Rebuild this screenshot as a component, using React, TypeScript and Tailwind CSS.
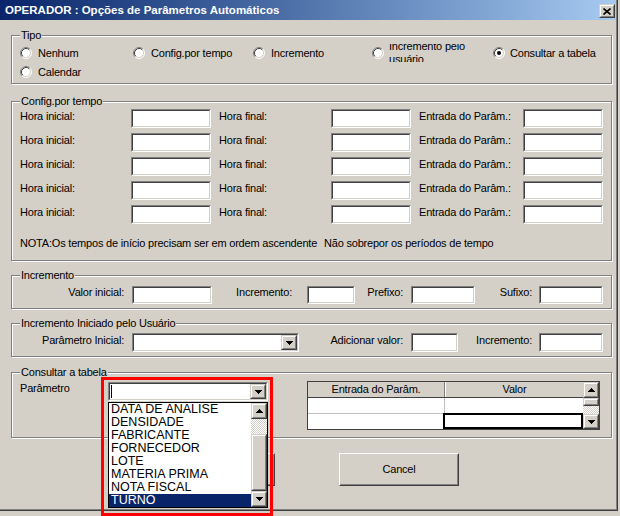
import React from "react";

type Box = { className?: string; children?: React.ReactNode };

function Arrow({ up = false }: { up?: boolean }) {
  return (
    <svg width="7" height="4" viewBox="0 0 7 4" className={up ? "rotate-180" : ""}>
      <rect x="0" y="0" width="7" height="1" fill="#000" />
      <rect x="1" y="1" width="5" height="1" fill="#000" />
      <rect x="2" y="2" width="3" height="1" fill="#000" />
      <rect x="3" y="3" width="1" height="1" fill="#000" />
    </svg>
  );
}

function SmallBtn({ className = "", children }: Box) {
  return (
    <div className={`shrink-0 bg-[#d4d0c8] border border-t-[#d4d0c8] border-l-[#d4d0c8] border-r-[#404040] border-b-[#404040] ${className}`}>
      <div className="h-full border border-t-white border-l-white border-r-[#808080] border-b-[#808080] flex items-center justify-center">
        {children}
      </div>
    </div>
  );
}

function Checker({ className = "" }: Box) {
  return (
    <div className={`bg-[repeating-conic-gradient(#ffffff_0%_25%,#d4d0c8_0%_50%)] bg-size-[2px_2px] ${className}`} />
  );
}

function Edit({ className = "" }: Box) {
  return (
    <div className={`shrink-0 border border-t-[#808080] border-l-[#808080] border-r-white border-b-white ${className}`}>
      <div className="h-full border border-t-[#404040] border-l-[#404040] border-r-[#d4d0c8] border-b-[#d4d0c8] bg-white" />
    </div>
  );
}

function Combo({ className = "", caret = false }: Box & { caret?: boolean }) {
  return (
    <div className={`shrink-0 border border-t-[#808080] border-l-[#808080] border-r-white border-b-white ${className}`}>
      <div className="h-full border border-t-[#404040] border-l-[#404040] border-r-[#d4d0c8] border-b-[#d4d0c8] bg-white flex">
        <div className="flex-1 flex items-center pl-px">
          {caret && <div className="w-px h-[13px] bg-black" />}
        </div>
        <SmallBtn className="w-[16px] h-full">
          <Arrow />
        </SmallBtn>
      </div>
    </div>
  );
}

function Radio({ checked = false }: { checked?: boolean }) {
  return (
    <svg width="12" height="12" viewBox="0 0 12 12" className="shrink-0">
      <circle cx="6" cy="6" r="5" fill="#fff" />
      <path d="M2.11 9.89A5.5 5.5 0 0 1 9.89 2.11" stroke="#808080" fill="none" />
      <path d="M9.89 2.11A5.5 5.5 0 0 1 2.11 9.89" stroke="#fff" fill="none" />
      <path d="M2.82 9.18A4.5 4.5 0 0 1 9.18 2.82" stroke="#404040" fill="none" />
      <path d="M9.18 2.82A4.5 4.5 0 0 1 2.82 9.18" stroke="#d4d0c8" fill="none" />
      {checked && <circle cx="6" cy="6" r="2" fill="#000" />}
    </svg>
  );
}

function Group({ title, className = "", children }: Box & { title: string }) {
  return (
    <fieldset className={`border border-[#808080] shadow-[inset_1px_1px_0_#fff,1px_1px_0_#fff] ${className}`}>
      <legend className="ml-[8px] px-px bg-[#d4d0c8] leading-[13px]">{title}</legend>
      {children}
    </fieldset>
  );
}

function PushBtn({ label }: { label: string }) {
  return (
    <div className="w-[120px] h-[33px] bg-[#d4d0c8] border border-t-white border-l-white border-r-[#404040] border-b-[#404040]">
      <div className="h-full border border-t-[#d4d0c8] border-l-[#d4d0c8] border-r-[#808080] border-b-[#808080] flex items-center justify-center">
        {label}
      </div>
    </div>
  );
}

const items = [
  "DATA DE ANALISE",
  "DENSIDADE",
  "FABRICANTE",
  "FORNECEDOR",
  "LOTE",
  "MATERIA PRIMA",
  "NOTA FISCAL",
  "TURNO",
];

export default function App() {
  return (
    <div className="w-[620px] h-[516px] bg-[#d4d0c8] overflow-hidden font-['Liberation_Sans',Arial,sans-serif] text-[11px] leading-[13px] tracking-[-0.2px] text-black">
      <div className="w-[618px] h-[511px] border-r border-b border-r-[#404040] border-b-[#404040]">
        <div className="h-full border-r border-b border-r-[#808080] border-b-[#808080] flex flex-col">
          {/* title bar */}
          <div className="h-[20px] shrink-0 bg-linear-to-r from-[#0a246a] to-[#a6caf0] flex items-start pl-[5px] pr-px">
            <span className="mt-[4px] text-white font-bold text-[11.5px] tracking-normal">
              OPERADOR : Opções de Parâmetros Automáticos
            </span>
            <SmallBtn className="ml-auto mt-[4px] w-[16px] h-[14px]">
              <svg width="8" height="7" viewBox="0 0 8 7">
                <path d="M0.5 0.5L7.5 6.5M7.5 0.5L0.5 6.5" stroke="#000" strokeWidth="1.6" />
              </svg>
            </SmallBtn>
          </div>

          <div className="pl-[11px] pr-[4px] flex flex-col">
            {/* Tipo */}
            <Group title="Tipo" className="mt-[9px] h-[55px]">
              <div className="mt-[2px] pl-[8px] flex flex-col gap-px">
                <div className="h-[18px] flex items-center">
                  <div className="w-[113px] flex items-center gap-[6px]">
                    <Radio />
                    <span>Nenhum</span>
                  </div>
                  <div className="w-[120px] flex items-center gap-[6px]">
                    <Radio />
                    <span>Config.por tempo</span>
                  </div>
                  <div className="w-[119px] flex items-center gap-[6px]">
                    <Radio />
                    <span>Incremento</span>
                  </div>
                  <div className="w-[121px] flex items-center gap-[5px]">
                    <Radio />
                    <div className="h-[18px] w-[92px] overflow-hidden flex items-center">
                      <span>Incremento pelo usuário</span>
                    </div>
                  </div>
                  <div className="flex items-center gap-[5px]">
                    <Radio checked />
                    <span>Consultar a tabela</span>
                  </div>
                </div>
                <div className="h-[18px] flex items-center gap-[6px]">
                  <Radio />
                  <span>Calendar</span>
                </div>
              </div>
            </Group>

            {/* Config.por tempo */}
            <Group title="Config.por tempo" className="mt-[11px] h-[166px]">
              <div className="mt-px flex flex-col gap-[5px]">
                {[0, 1, 2, 3, 4].map((i) => (
                  <div key={i} className="h-[19px] flex items-start">
                    <span className="w-[119px] pl-[8px] pt-px">Hora inicial:</span>
                    <Edit className="w-[80px] h-[19px]" />
                    <span className="w-[120px] pl-[8px] pt-px">Hora final:</span>
                    <Edit className="w-[80px] h-[19px]" />
                    <span className="w-[112px] pl-[8px] pt-px">Entrada do Parâm.:</span>
                    <Edit className="w-[80px] h-[19px]" />
                  </div>
                ))}
              </div>
              <div className="mt-[13px] pl-[8px] flex whitespace-nowrap">
                <span className="w-[304px]">NOTA:Os tempos de início precisam ser em ordem ascendente</span>
                <span>Não sobrepor os períodos de tempo</span>
              </div>
            </Group>

            {/* Incremento */}
            <Group title="Incremento" className="mt-[8px] h-[40px]">
              <div className="mt-[4px] h-[18px] flex items-start">
                <span className="w-[120px] pr-[8px] text-right">Valor inicial:</span>
                <Edit className="w-[80px] h-[18px]" />
                <span className="w-[95px] pr-[15px] text-right">Incremento:</span>
                <Edit className="w-[48px] h-[18px]" />
                <span className="w-[56px] pr-[8px] text-right">Prefixo:</span>
                <Edit className="w-[64px] h-[18px]" />
                <span className="w-[64px] pr-[7px] text-right">Sufixo:</span>
                <Edit className="w-[64px] h-[18px]" />
              </div>
            </Group>

            {/* Incremento Iniciado pelo Usuário */}
            <Group title="Incremento Iniciado pelo Usuário" className="mt-[8px] h-[40px]">
              <div className="mt-[3px] h-[19px] flex items-start">
                <span className="w-[120px] pr-[8px] pt-px text-right">Parâmetro Inicial:</span>
                <Combo className="w-[167px] h-[19px]" />
                <span className="w-[112px] pr-[8px] pt-px text-right">Adicionar valor:</span>
                <Edit className="w-[47px] h-[19px]" />
                <span className="w-[81px] pr-[7px] pt-px text-right">Incremento:</span>
                <Edit className="w-[64px] h-[19px]" />
              </div>
            </Group>

            {/* Consultar a tabela */}
            <Group title="Consultar a tabela" className="mt-[9px] h-[72px]">
              <div className="mt-[3px] pl-[8px] flex items-start">
                <span className="w-[88px]">Parâmetro</span>
                <div className="relative w-[160px] h-[19px]">
                  <Combo className="w-full h-full" caret />
                  {/* opened drop-down list */}
                  <div className="absolute left-0 top-[20px] w-[160px] h-[106px] border border-black bg-white flex z-10">
                    <div className="flex-1 flex flex-col font-['Liberation_Sans_Narrow','Liberation_Sans',sans-serif] text-[12.5px] tracking-normal">
                      {items.map((it) => (
                        <div
                          key={it}
                          className={`h-[13px] leading-[13px] pl-[2px] whitespace-nowrap ${
                            it === "TURNO" ? "bg-[#0a246a] text-white" : ""
                          }`}
                        >
                          {it}
                        </div>
                      ))}
                    </div>
                    <div className="w-[16px] flex flex-col">
                      <SmallBtn className="w-[16px] h-[16px]">
                        <Arrow up />
                      </SmallBtn>
                      <Checker className="h-[15px]" />
                      <SmallBtn className="w-[16px] h-[57px]" />
                      <SmallBtn className="w-[16px] h-[16px]">
                        <Arrow />
                      </SmallBtn>
                    </div>
                  </div>
                  <div className="absolute -left-[7px] -top-[5px] w-[172px] h-[139px] border-[3px] border-[#ff0000] pointer-events-none z-20" />
                </div>

                {/* grid */}
                <div className="-mt-px ml-[39px] w-[293px] h-[49px] border border-[#404040] flex">
                  <div className="w-[275px] flex flex-col bg-white">
                    <div className="h-[16px] flex bg-[#d4d0c8] border-b border-[#404040]">
                      <div className="w-[137px] flex items-center justify-center border-r border-[#808080]">
                        Entrada do Parâm.
                      </div>
                      <div className="flex-1 flex items-center justify-center border-l border-white">Valor</div>
                    </div>
                    <div className="h-[16px] flex border-b border-[#c0c0c0]">
                      <div className="w-[137px] border-r border-[#c0c0c0]" />
                      <div className="flex-1" />
                    </div>
                    <div className="flex-1 flex">
                      <div className="w-[135px]" />
                      <div className="flex-1 -mt-px border-2 border-black" />
                    </div>
                  </div>
                  <div className="w-[16px] flex flex-col">
                    <SmallBtn className="w-[16px] h-[16px]">
                      <Arrow up />
                    </SmallBtn>
                    <SmallBtn className="w-[16px] h-[8px]" />
                    <Checker className="h-[8px]" />
                    <SmallBtn className="w-[16px] flex-1">
                      <Arrow />
                    </SmallBtn>
                  </div>
                </div>
              </div>
            </Group>

            {/* buttons */}
            <div className="mt-[15px] ml-[144px] flex gap-[64px]">
              <PushBtn label="OK" />
              <PushBtn label="Cancel" />
            </div>
          </div>
        </div>
      </div>
    </div>
  );
}
